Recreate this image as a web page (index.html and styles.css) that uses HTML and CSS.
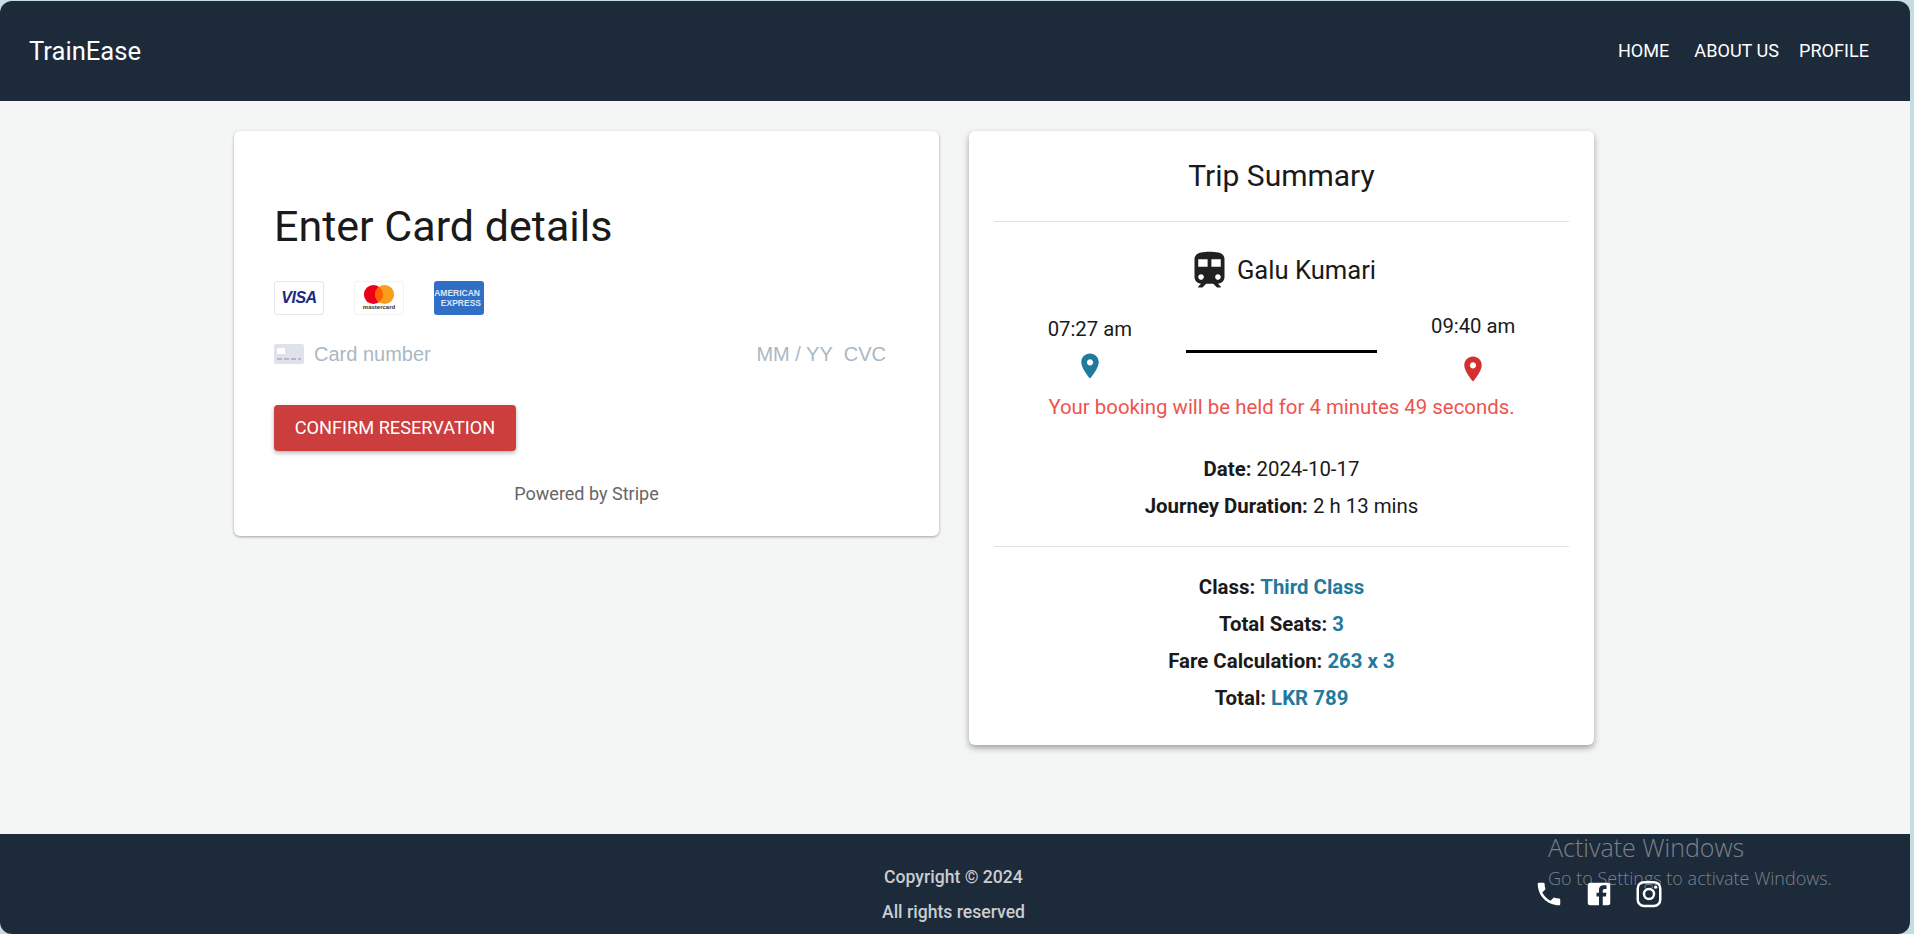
FILE: index.html
```html
<!DOCTYPE html>
<html lang="en">
<head>
  <meta charset="UTF-8" />
  <meta name="viewport" content="width=device-width, initial-scale=1" />
  <title>TrainEase</title>
  <link rel="stylesheet" href="styles.css">
</head>
<body>
  <div class="window">
    <header class="top-bar">
      <div class="logo">TrainEase</div>
      <nav class="nav">
        <a class="nav-home">HOME</a>
        <a class="nav-about">ABOUT US</a>
        <a>PROFILE</a>
      </nav>
    </header>

    <main class="content">
      <section class="card pay-card">
        <h1>Enter Card details</h1>
        <div class="brands">
          <div class="brand brand-visa">VISA</div>
          <div class="brand brand-mc">
            <svg width="32" height="19" viewBox="0 0 28 17">
              <circle cx="9" cy="8.5" r="8.5" fill="#eb001b" />
              <circle cx="19" cy="8.5" r="8.5" fill="#f79e1b" />
              <path d="M14 1.6a8.5 8.5 0 0 1 0 13.8a8.5 8.5 0 0 1 0-13.8z" fill="#ff5f00" />
            </svg>
            <span>mastercard</span>
          </div>
          <div class="brand brand-amex"><span>AMERICAN</span><span class="amex-low">EXPRESS</span></div>
        </div>
        <div class="card-input">
          <svg class="card-glyph" width="30" height="20" viewBox="0 0 30 20">
            <rect width="30" height="20" rx="2" fill="#dfe2ea" />
            <rect x="3" y="4" width="8" height="6" rx="1" fill="#fff" />
            <path d="M3 15h5M10 15h5M17 15h5M24 15h3" stroke="#b4b9c6" stroke-width="2" />
          </svg>
          <span class="card-number">Card number</span>
          <span class="card-extra">MM / YY</span>
          <span class="card-cvc">CVC</span>
        </div>
        <button class="confirm">CONFIRM RESERVATION</button>
        <p class="powered">Powered by Stripe</p>
      </section>

      <section class="card trip-card">
        <h2>Trip Summary</h2>
        <hr />
        <div class="train-name">
          <svg width="45" height="45" viewBox="0 0 24 24"><path fill="#212121" d="M12 2c-4 0-8 .5-8 4v9.5C4 17.43 5.57 19 7.5 19L6 20.5v.5h2.23l2-2H14l2 2h2v-.5L16.5 19c1.93 0 3.5-1.57 3.5-3.5V6c0-3.5-3.58-4-8-4zM7.5 17c-.83 0-1.5-.67-1.5-1.5S6.67 14 7.5 14s1.5.67 1.5 1.5S8.33 17 7.5 17zm3.5-7H6V6h5v4zm2 0V6h5v4h-5zm3.5 7c-.83 0-1.5-.67-1.5-1.5s.67-1.5 1.5-1.5 1.5.67 1.5 1.5-.67 1.5-1.5 1.5z"/></svg>
          <span>Galu Kumari</span>
        </div>
        <div class="times">
          <div class="stop stop-from">
            <span>07:27 am</span>
            <svg width="30" height="30" viewBox="0 0 24 24"><path fill="#1f7a9c" d="M12 2C8.13 2 5 5.13 5 9c0 5.25 7 13 7 13s7-7.75 7-13c0-3.87-3.13-7-7-7zm0 9.5c-1.38 0-2.5-1.12-2.5-2.5s1.12-2.5 2.5-2.5 2.5 1.12 2.5 2.5-1.12 2.5-2.5 2.5z"/></svg>
          </div>
          <div class="track"></div>
          <div class="stop stop-to">
            <span>09:40 am</span>
            <svg width="30" height="30" viewBox="0 0 24 24"><path fill="#d32f2f" d="M12 2C8.13 2 5 5.13 5 9c0 5.25 7 13 7 13s7-7.75 7-13c0-3.87-3.13-7-7-7zm0 9.5c-1.38 0-2.5-1.12-2.5-2.5s1.12-2.5 2.5-2.5 2.5 1.12 2.5 2.5-1.12 2.5-2.5 2.5z"/></svg>
          </div>
        </div>
        <p class="held">Your booking will be held for 4 minutes 49 seconds.</p>
        <div class="rows rows-date">
          <p><b>Date:</b> 2024-10-17</p>
          <p><b>Journey Duration:</b> 2 h 13 mins</p>
        </div>
        <hr />
        <div class="rows rows-fare">
          <p><b>Class:</b> <b class="val">Third Class</b></p>
          <p><b>Total Seats:</b> <b class="val">3</b></p>
          <p><b>Fare Calculation:</b> <b class="val">263 x 3</b></p>
          <p><b>Total:</b> <b class="val">LKR 789</b></p>
        </div>
      </section>
    </main>

    <footer class="footer">
      <div class="copy">
        <p>Copyright © 2024</p>
        <p>All rights reserved</p>
      </div>
      <div class="socials">
        <svg width="30" height="30" viewBox="0 0 24 24"><path fill="#fff" d="M6.62 10.79c1.44 2.83 3.76 5.14 6.59 6.59l2.2-2.2c.27-.27.67-.36 1.02-.24 1.12.37 2.33.57 3.57.57.55 0 1 .45 1 1V20c0 .55-.45 1-1 1-9.39 0-17-7.61-17-17 0-.55.45-1 1-1h3.5c.55 0 1 .45 1 1 0 1.25.2 2.45.57 3.57.11.35.03.74-.25 1.02l-2.2 2.2z"/></svg>
        <svg width="30" height="30" viewBox="0 0 24 24"><path fill="#fff" d="M5 3h14a2 2 0 0 1 2 2v14a2 2 0 0 1-2 2h-4v-7h2.5l.5-3h-3V9.5c0-.8.4-1.5 1.5-1.5H18V5h-2.5C13 5 12 6.7 12 9v2h-2v3h2v7H5a2 2 0 0 1-2-2V5a2 2 0 0 1 2-2z"/></svg>
        <svg width="30" height="30" viewBox="0 0 24 24"><rect x="3" y="2.5" width="18" height="19" rx="5" fill="none" stroke="#fff" stroke-width="2"/><circle cx="12" cy="12" r="4" fill="none" stroke="#fff" stroke-width="2"/><circle cx="17.3" cy="6.5" r="1.3" fill="#fff"/></svg>
      </div>
      <div class="activate">
        <div class="activate-title">Activate Windows</div>
        <div class="activate-sub">Go to Settings to activate Windows.</div>
      </div>
    </footer>
  </div>
</body>
</html>
```

FILE: styles.css
```css
html, body {
  margin: 0;
  padding: 0;
  height: 100%;
  overflow: hidden;
  background: #c3dde3;
  font-family: Roboto, sans-serif;
  color: #1a1a1a;
}

.window {
  width: 1910px;
  height: 933px;
  margin-top: 1px;
  display: flex;
  flex-direction: column;
  background: #f4f6f5;
  border-radius: 12px;
  overflow: hidden;
  position: relative;
}

/* Top bar */
.top-bar {
  height: 100px;
  flex-shrink: 0;
  background: #1c2a3a;
  color: #fff;
  display: flex;
  align-items: center;
  justify-content: space-between;
  padding: 0 41px 0 29px;
  box-sizing: border-box;
}

.logo {
  font-size: 25.6px;
}

.nav {
  display: flex;
  gap: 20px;
  padding-bottom: 1px;
  font-size: 18.1px;
  font-weight: 400;
}

.nav-home { margin-right: 5px; }

/* Cards */
.content {
  flex: 1;
  display: flex;
  align-items: flex-start;
  gap: 30px;
  padding: 30px 0 0 234px;
}

.card {
  background: #fff;
  border-radius: 6px;
  box-sizing: border-box;
}

.pay-card {
  width: 705px;
  height: 405px;
  padding: 70px 53px 0 40px;
  box-shadow: 0 1px 3px rgba(0,0,0,0.35);
}

.pay-card h1 {
  margin: 0;
  font-size: 43px;
  font-weight: 400;
  line-height: 50px;
}

.brands {
  display: flex;
  gap: 30px;
  margin-top: 30px;
}

.brand {
  width: 50px;
  height: 34px;
  box-sizing: border-box;
  border-radius: 3px;
  background: #fff;
  display: flex;
  flex-direction: column;
  align-items: center;
  justify-content: center;
}

.brand-visa {
  border: 1px solid #e4e6ea;
  color: #1a2a80;
  font: italic 700 16px "Liberation Sans", sans-serif;
  letter-spacing: -0.5px;
}

.brand-mc {
  border: 1px solid #f1f2f4;
  font: 600 6px/7px "Liberation Sans", sans-serif;
  color: #333;
}

.brand-amex {
  background: #306fc5;
  color: #dbe7f7;
  font: 700 8.5px/10px "Liberation Sans", sans-serif;
  align-items: flex-end;
  padding-right: 3px;
}

.brand-amex span:first-child {
  margin-right: 1px;
}

.card-input {
  display: flex;
  align-items: center;
  margin-top: 27px;
  height: 24px;
  font: 20px "Liberation Sans", sans-serif;
  color: #aab7c4;
}

.card-glyph {
  margin-right: 10px;
}

.card-number {
  flex: 1;
}

.card-cvc {
  margin-left: 11px;
}

.confirm {
  display: block;
  margin-top: 39px;
  width: 242px;
  height: 46px;
  padding: 0 0 2px;
  border: 0;
  border-radius: 4px;
  background: #cc3d3d;
  color: #fff;
  font: 400 18.2px Roboto, sans-serif;
  box-shadow: 0 2px 4px rgba(0,0,0,0.3);
}

.powered {
  margin: 32px -13px 0 0;
  text-align: center;
  font-size: 18px;
  color: #666;
}

/* Trip summary */
.trip-card {
  width: 625px;
  height: 614px;
  padding: 26px 25px 0;
  text-align: center;
  box-shadow: 0 3px 6px rgba(0,0,0,0.35);
}

.trip-card h2 {
  margin: 0;
  font-size: 30px;
  font-weight: 400;
  line-height: 38px;
}

.trip-card hr {
  margin: 0;
  border: 0;
  border-top: 1px solid #e0e0e0;
}

.trip-card h2 + hr {
  margin-top: 26px;
}

.train-name {
  display: flex;
  align-items: center;
  justify-content: center;
  gap: 5px;
  margin-top: 30px;
  font-size: 25.6px;
  height: 36px;
}

.times {
  display: grid;
  grid-template-columns: 1fr 1fr 1fr;
  margin-top: 26px;
  font-size: 20.3px;
  height: 81px;
}

.stop {
  display: flex;
  flex-direction: column;
  align-items: center;
}

.stop-from { padding-top: 3px; }
.stop-from svg { margin-top: 10px; }
.stop-to svg { margin-top: 16px; }

.track {
  height: 3px;
  background: #000;
  margin-top: 36px;
}

.held {
  margin: 0;
  font-size: 20.4px;
  line-height: 24px;
  color: #ef5350;
}

.rows p {
  margin: 0;
  font-size: 20.4px;
  line-height: 37px;
}

.rows b {
  font-weight: 700;
}

.rows-date {
  margin-top: 32px;
  margin-bottom: 21px;
}

.rows-fare {
  margin-top: 22px;
}

.val {
  color: #1f7a9c;
}

/* Footer */
.footer {
  height: 100px;
  flex-shrink: 0;
  background: #1c2a3a;
  color: #c9cdd2;
  position: relative;
  display: grid;
  grid-template-columns: 1fr auto 1fr;
  font-size: 17.6px;
  font-weight: 500;
}

.copy {
  grid-column: 2;
  text-align: center;
  padding-top: 33px;
  margin-left: -3px;
}

.copy p {
  margin: 0 0 15px;
  line-height: 20px;
}

.socials {
  grid-column: 3;
  display: flex;
  gap: 20px;
  padding: 45px 0 0 509px;
}

/* Windows watermark sits over the footer */
.activate {
  position: absolute;
  left: 1548px;
  top: -3px;
  color: rgba(255,255,255,0.42);
  font-family: "Open Sans", sans-serif;
  font-weight: 300;
}

.activate-title {
  font-size: 25px;
  line-height: 33px;
}

.activate-sub {
  font-size: 18px;
  line-height: 22px;
  margin-top: 3px;
}
```
